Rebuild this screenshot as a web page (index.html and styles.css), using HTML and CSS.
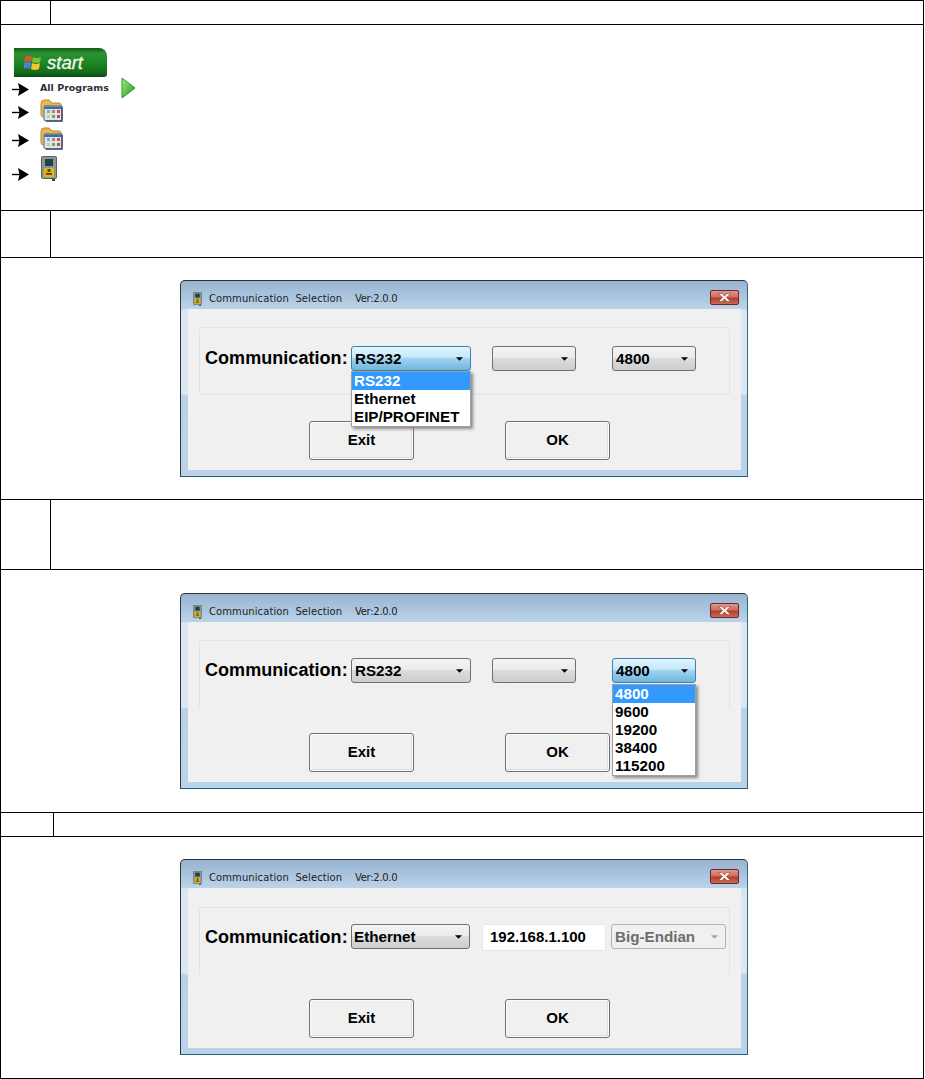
FILE: index.html
```html
<!DOCTYPE html>
<html lang="en">
<head>
<meta charset="utf-8">
<title>Communication Selection</title>
<link rel="stylesheet" href="styles.css">
</head>
<body>
<svg class="defs" width="0" height="0" aria-hidden="true">
  <defs>
    <symbol id="arrow" viewBox="0 0 17 13"><path d="M0 6.5H8" stroke="#000" stroke-width="1.4"/><path d="M6 0L17 6.5L6 13L7.5 6.5Z" fill="#000"/></symbol>
    <symbol id="folder" viewBox="0 0 23 23">
      <path d="M1 5Q1 1 4 1H9L12 4H19Q21 4 21 6V18H3Q1 18 1 15Z" fill="#eab64f" stroke="#ba873a"/>
      <path d="M3 19V6H4V19Z" fill="#f7dc95"/>
      <path d="M4 7H22V21Q22 22 21 22H6Q4 22 4 20Z" fill="#dfe6ea" stroke="#4d5f7d"/>
      <path d="M4.500 7.500H21.500V10H4.500Z" fill="#356eae"/>
      <path d="M7 11h3v3H7z" fill="#6fb6c9"/><path d="M12 11h3v3h-3z" fill="#e0705f"/><path d="M17 11h3v3h-3z" fill="#c7554d"/>
      <path d="M7 16h3v3H7z" fill="#e2c77a"/><path d="M12 16h3v3h-3z" fill="#62b06c"/><path d="M17 16h3v3h-3z" fill="#b9524a"/>
      <path d="M22 8V22H6" fill="none" stroke="#3f4f6d" stroke-width="1.500"/>
    </symbol>
    <symbol id="device" viewBox="0 0 16 25">
      <rect x="0.5" y="0.5" width="15" height="22" rx="1" fill="#8d9691" stroke="#5c635f"/>
      <rect x="4" y="3" width="8" height="7" fill="#14484c"/>
      <rect x="3" y="12" width="10" height="9" fill="#e4b714"/>
      <path d="M6.500 13h3v3h-3zM5 17h6v2H5z" fill="#5d4f10"/>
      <rect x="11" y="23" width="3" height="2" fill="#444"/>
    </symbol>
    <symbol id="caret" viewBox="0 0 8 4"><path d="M0 0H8L4 4Z"/></symbol>
    <symbol id="closex" viewBox="0 0 13 9"><path d="M0.500 0.500H4L6.500 3L9 0.500H12.500L8.500 4.500L12.500 8.500H9L6.500 6L4 8.500H0.500L4.500 4.500Z" fill="#fbf4ee" stroke="#8c4a42" stroke-width="0.600"/></symbol>
  </defs>
</svg>

<main class="sheet">
  <div class="row row-24"><div class="num"></div><div class="body"></div></div>

  <div class="row row-start">
    <div class="startmenu">
      <div class="startbtn">
        <svg class="winlogo" viewBox="0 0 18 17" aria-hidden="true">
          <path d="M1 3Q4 1 8 3L7 8Q4 6 0 8Z" fill="#e0562b"/>
          <path d="M9 3Q13 5 17 3L16 8Q12 10 8 8Z" fill="#7fbf3a"/>
          <path d="M0 9Q4 7 7 9L6 15Q3 13 0 15Z" fill="#4a7fdc"/>
          <path d="M8 9Q12 11 16 9L15 15Q11 17 7 15Z" fill="#f0c92c"/>
        </svg>
        <span class="starttext">start</span>
      </div>
      <div class="step step-programs">
        <svg class="arrow arrow-low"><use href="#arrow"/></svg>
        <span class="allprog">All Programs</span>
        <svg class="play" viewBox="0 0 15 22" aria-hidden="true">
          <defs><linearGradient id="playfill" x1="0" y1="0" x2="1" y2="1"><stop offset="0" stop-color="#a8ea84"/><stop offset="1" stop-color="#129a1c"/></linearGradient></defs>
          <path d="M1 1L14 11L1 21Z" fill="url(#playfill)" stroke="#2a9a2a" stroke-linejoin="round"/>
        </svg>
      </div>
      <div class="step step-f1">
        <svg class="arrow arrow-f"><use href="#arrow"/></svg>
        <svg class="folder"><use href="#folder"/></svg>
      </div>
      <div class="step step-f2">
        <svg class="arrow arrow-f"><use href="#arrow"/></svg>
        <svg class="folder"><use href="#folder"/></svg>
      </div>
      <div class="step step-dev">
        <svg class="arrow arrow-d"><use href="#arrow"/></svg>
        <svg class="device"><use href="#device"/></svg>
      </div>
    </div>
  </div>

  <div class="row row-47"><div class="num"></div><div class="body"></div></div>

  <div class="row row-shot shot-a">
    <section class="dialog dialog-a">
      <header class="titlebar">
        <svg class="appicon"><use href="#device"/></svg>
        <span class="title">Communication&nbsp; Selection</span>
        <span class="ver">Ver:2.0.0</span>
        <span class="close"><svg class="closeicon"><use href="#closex"/></svg></span>
      </header>
      <div class="client">
        <div class="group">
          <span class="label">Communication:</span>
          <div class="combo combo-120 focus"><span>RS232</span><svg class="caret"><use href="#caret"/></svg>
            <ul class="drop">
              <li class="sel">RS232</li><li>Ethernet</li><li>EIP/PROFINET</li>
            </ul>
          </div>
          <div class="combo combo-84 gap-21"><span></span><svg class="caret"><use href="#caret"/></svg></div>
          <div class="combo combo-84 gap-36"><span>4800</span><svg class="caret"><use href="#caret"/></svg></div>
        </div>
        <div class="actions"><button class="btn">Exit</button><button class="btn">OK</button></div>
      </div>
    </section>
  </div>

  <div class="row row-70"><div class="num"></div><div class="body"></div></div>

  <div class="row row-shot shot-b">
    <section class="dialog dialog-b">
      <header class="titlebar">
        <svg class="appicon"><use href="#device"/></svg>
        <span class="title">Communication&nbsp; Selection</span>
        <span class="ver">Ver:2.0.0</span>
        <span class="close"><svg class="closeicon"><use href="#closex"/></svg></span>
      </header>
      <div class="client">
        <div class="group open">
          <span class="label">Communication:</span>
          <div class="combo combo-120"><span>RS232</span><svg class="caret"><use href="#caret"/></svg></div>
          <div class="combo combo-84 gap-21"><span></span><svg class="caret"><use href="#caret"/></svg></div>
          <div class="combo combo-84 gap-36 focus"><span>4800</span><svg class="caret"><use href="#caret"/></svg>
            <ul class="drop">
              <li class="sel">4800</li><li>9600</li><li>19200</li><li>38400</li><li>115200</li>
            </ul>
          </div>
        </div>
        <div class="actions"><button class="btn">Exit</button><button class="btn">OK</button></div>
      </div>
    </section>
  </div>

  <div class="row row-24"><div class="num num-wide"></div><div class="body"></div></div>

  <div class="row row-shot shot-c">
    <section class="dialog dialog-c">
      <header class="titlebar">
        <svg class="appicon"><use href="#device"/></svg>
        <span class="title">Communication&nbsp; Selection</span>
        <span class="ver">Ver:2.0.0</span>
        <span class="close"><svg class="closeicon"><use href="#closex"/></svg></span>
      </header>
      <div class="client">
        <div class="group open">
          <span class="label">Communication:</span>
          <div class="combo combo-119"><span>Ethernet</span><svg class="caret"><use href="#caret"/></svg></div>
          <div class="ipbox">192.168.1.100</div>
          <div class="combo combo-115 disabled"><span>Big-Endian</span><svg class="caret"><use href="#caret"/></svg></div>
        </div>
        <div class="actions"><button class="btn">Exit</button><button class="btn">OK</button></div>
      </div>
    </section>
  </div>
</main>
</body>
</html>
```

FILE: styles.css
```css
* { box-sizing: border-box; }
html, body { margin: 0; padding: 0; background: #fff; }
body { font-family: "Liberation Sans", Arial, sans-serif; color: #000; height: 1079px; overflow: hidden; }
.defs { position: absolute; }

.sheet { width: 924px; border: 1px solid #000; display: flex; flex-direction: column; height: 1079px; }
.row { display: flex; border-bottom: 1px solid #000; flex: none; }
.row:last-child { border-bottom: 0; }
.row-24 { height: 24px; }
.row-start { height: 186px; }
.row-47 { height: 47px; }
.row-70 { height: 70px; }
.num { width: 50px; border-right: 1px solid #000; flex: none; }
.num-wide { width: 53px; }
.body { flex: 1; }

.startmenu { padding: 23px 0 0 11px; display: flex; flex-direction: column; align-items: flex-start; }
.startbtn { width: 93px; height: 29px; margin-left: 2px; display: flex; align-items: center; padding-left: 10px; gap: 5px; border-radius: 0 8px 3px 0;
  background: linear-gradient(#125a18 0, #2a9330 18%, #1c8422 55%, #146a1a 85%, #0e4e13 100%); }
.winlogo { width: 18px; height: 17px; flex: none; }
.starttext { color: #f1f5ee; font-size: 18.500px; font-style: italic; font-weight: 400; -webkit-text-stroke: 0.3px #f1f5ee; }
.step { display: flex; align-items: flex-start; }
.arrow { width: 17px; height: 13px; flex: none; }
.step-programs { height: 22px; }
.arrow-low { margin-top: 6px; }
.allprog { margin: 4px 0 0 11px; width: 81px; font-family: "DejaVu Sans", sans-serif; font-weight: 700; font-size: 9.500px; line-height: 14px; color: #2f2f33; white-space: nowrap; }
.play { width: 15px; height: 22px; }
.step-f1 { height: 23px; }
.step-f2 { margin-top: 5px; height: 22px; }
.step-dev { margin-top: 7px; height: 25px; }
.arrow-f { margin-top: 7px; }
.arrow-d { margin-top: 12px; }
.folder { width: 23px; height: 23px; margin-left: 11px; flex: none; }
.device { width: 16px; height: 25px; margin-left: 12px; flex: none; }

.row-shot { padding-left: 179px; }
.shot-a { height: 242px; padding-top: 22px; }
.shot-b { height: 243px; padding-top: 23px; }
.shot-c { height: 241px; padding-top: 22px; }

.dialog { width: 568px; height: 196px; border: 1px solid #333; border-bottom-color: #1f6472; border-right-color: #2b6a78; border-radius: 5px 5px 0 0; padding: 0 6px 6px 7px; display: flex; flex-direction: column;
  background: linear-gradient(#97b4d1 0, #bcd3ea 28px, #dae7f3 29px, #dae7f3 113px, #b9d2ea 115px, #bad3eb 100%); }
.dialog-a { height: 197px; }
.titlebar { height: 28px; flex: none; position: relative; display: flex; align-items: center; padding-top: 7px; font-family: "DejaVu Sans", sans-serif; font-size: 10px; color: #222; }
.appicon { width: 9px; height: 14px; margin-left: 5px; flex: none; }
.title { margin-left: 7px; width: 146px; letter-spacing: 0.08px; white-space: nowrap; }
.ver { white-space: nowrap; letter-spacing: -0.3px; }
.close { position: absolute; right: 2px; top: 9px; width: 29px; height: 15px; border: 1px solid #6b2a2a; border-radius: 2px; display: flex; align-items: center; justify-content: center;
  background: linear-gradient(#dd968c 0, #cf6e60 45%, #b63a2a 55%, #c96a5a 100%); }
.closeicon { width: 13px; height: 9px; }

.client { flex: 1; background: #f0f0f0; padding: 18px 11px 0; }
.dialog-c .client { padding-top: 19px; }
.group { width: 531px; height: 68px; border: 1px solid #dfe4e9; border-radius: 3px; padding: 18px 0 0 5px; display: flex; align-items: flex-start; }
.dialog-b .group { padding-top: 17px; }
.dialog-c .group { padding-top: 16px; }
.group.open { border-bottom-color: transparent; }
.label { width: 146px; flex: none; font-size: 18px; font-weight: 700; letter-spacing: 0.05px; line-height: 25px; white-space: nowrap; }
.dialog-c .label { padding-top: 1px; }
.combo { position: relative; height: 25px; flex: none; border: 1px solid #707070; border-radius: 3px; display: flex; align-items: center; justify-content: space-between; padding: 0 4px 0 3px; font-size: 15.200px; font-weight: 700;
  background: linear-gradient(#f3f3f3 0, #ebebeb 48%, #dcdcdc 50%, #cdcdcd 100%); }
.combo-120 { width: 120px; }
.combo-84 { width: 84px; }
.combo-119 { width: 119px; padding-left: 2px; }
.combo-115 { width: 115px; margin-left: 5px; }
.gap-21 { margin-left: 21px; }
.gap-36 { margin-left: 36px; }
.combo.focus { border-color: #3c7fb1; background: linear-gradient(#e3f4fc 0, #c4e7f8 45%, #9fd3f0 50%, #6fb6dd 100%); }
.combo.disabled { border-color: #adb2b5; background: #f0f0f0; color: #6d6d6d; }
.caret { width: 7px; height: 4px; fill: #000; flex: none; margin-right: 3px; }
.disabled .caret { fill: #a0a0a0; }
.drop { position: absolute; left: -1px; right: -1px; top: 100%; margin: 2px 0 0; padding: 0; list-style: none; background: #fff; border: 1px solid #a0a0a0; box-shadow: 2px 2px 3px #888; z-index: 2; color: #000; }
.dialog-a .drop { margin-top: 1px; }
.drop li { height: 18px; line-height: 18px; padding-left: 2px; font-size: 15.200px; white-space: nowrap; }
.drop .sel { background: #3399ff; color: #fff; }
.ipbox { width: 124px; height: 27px; margin-left: 12px; flex: none; background: #fff; border: 1px solid #e6e6e6; border-radius: 2px; font-size: 15px; font-weight: 700; line-height: 23px; padding-left: 7px; }

.actions { margin: 26px 0 0 110px; display: flex; gap: 91px; }
.dialog-b .actions { margin-top: 25px; }
.dialog-c .actions { margin-top: 24px; }
.btn { width: 105px; height: 39px; padding: 0 0 2px; border: 1px solid #6f6f6f; border-radius: 3px; background: #f0f0f0; box-shadow: inset 0 0 0 1px #fdfdfd, inset -1px -1px 0 1px #dcdcdc; font: 700 15px "Liberation Sans", sans-serif; color: #000; }
```
